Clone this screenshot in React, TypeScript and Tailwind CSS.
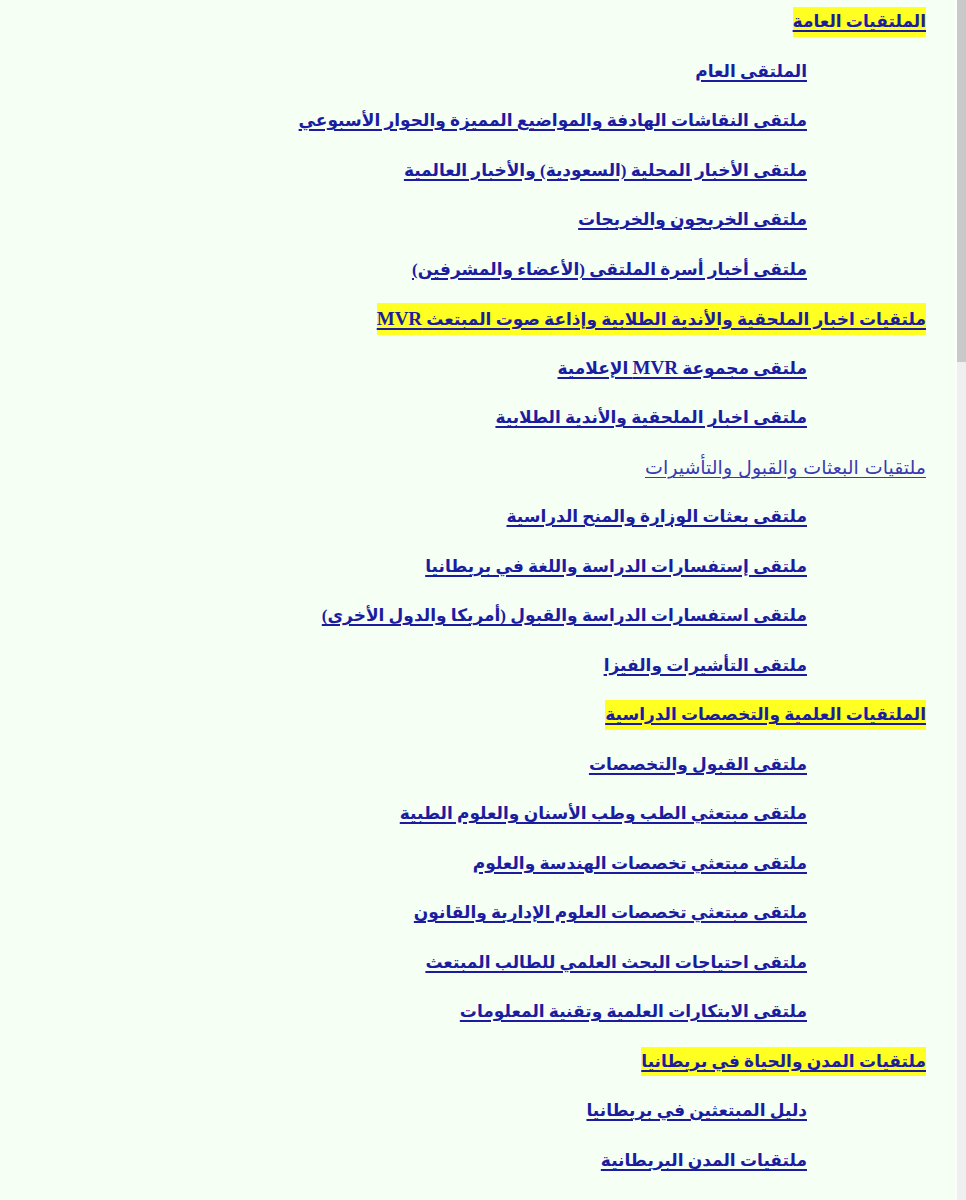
import { Fragment } from "react";

type Item = { text: string; kind: "head" | "plain" | "sub" };

const items: Item[] = [
  { text: "الملتقيات العامة", kind: "head" },
  { text: "الملتقى العام", kind: "sub" },
  { text: "ملتقى النقاشات الهادفة والمواضيع المميزة والحوار الأسبوعي", kind: "sub" },
  { text: "ملتقى الأخبار المحلية (السعودية) والأخبار العالمية", kind: "sub" },
  { text: "ملتقى الخريجون والخريجات", kind: "sub" },
  { text: "ملتقى أخبار أسرة الملتقى (الأعضاء والمشرفين)", kind: "sub" },
  { text: "ملتقيات اخبار الملحقية والأندية الطلابية وإذاعة صوت المبتعث MVR", kind: "head" },
  { text: "ملتقى مجموعة MVR الإعلامية", kind: "sub" },
  { text: "ملتقى اخبار الملحقية والأندية الطلابية", kind: "sub" },
  { text: "ملتقيات البعثات والقبول والتأشيرات", kind: "plain" },
  { text: "ملتقى بعثات الوزارة والمنح الدراسية", kind: "sub" },
  { text: "ملتقى إستفسارات الدراسة واللغة في بريطانيا", kind: "sub" },
  { text: "ملتقى استفسارات الدراسة والقبول (أمريكا والدول الأخرى)", kind: "sub" },
  { text: "ملتقى التأشيرات والفيزا", kind: "sub" },
  { text: "الملتقيات العلمية والتخصصات الدراسية", kind: "head" },
  { text: "ملتقى القبول والتخصصات", kind: "sub" },
  { text: "ملتقى مبتعثي الطب وطب الأسنان والعلوم الطبية", kind: "sub" },
  { text: "ملتقى مبتعثي تخصصات الهندسة والعلوم", kind: "sub" },
  { text: "ملتقى مبتعثي تخصصات العلوم الإدارية والقانون", kind: "sub" },
  { text: "ملتقى احتياجات البحث العلمي للطالب المبتعث", kind: "sub" },
  { text: "ملتقى الابتكارات العلمية وتقنية المعلومات", kind: "sub" },
  { text: "ملتقيات المدن والحياة في بريطانيا", kind: "head" },
  { text: "دليل المبتعثين في بريطانيا", kind: "sub" },
  { text: "ملتقيات المدن البريطانية", kind: "sub" },
];

function Label({ text }: { text: string }) {
  const parts = text.split(/(MVR)/);
  return (
    <>
      {parts.map((p, i) =>
        p === "MVR" ? (
          <span key={i} className="text-[19px]">
            {p}
          </span>
        ) : (
          <Fragment key={i}>{p}</Fragment>
        )
      )}
    </>
  );
}

function ForumLink({ item }: { item: Item }) {
  if (item.kind === "plain") {
    return (
      <a
        href="#"
        className="text-[19px] font-normal text-[#3a3ab0] underline decoration-1 underline-offset-[3px] [font-family:'DejaVu_Sans',sans-serif]"
      >
        {item.text}
      </a>
    );
  }
  return (
    <a
      href="#"
      className={
        item.kind === "head"
          ? "bg-[#ffff22] py-[2px] text-[17px] font-bold text-[#1c1ca0] underline decoration-[1.5px] underline-offset-[3px]"
          : "text-[17px] font-bold text-[#1c1ca0] underline decoration-[1.5px] underline-offset-[3px]"
      }
    >
      <Label text={item.text} />
    </a>
  );
}

export default function App() {
  return (
    <div className="flex h-[1200px] w-[966px] overflow-hidden bg-[#f5fff3] [font-family:'Liberation_Serif','DejaVu_Sans',serif]">
      {/* forum index */}
      <div dir="rtl" className="flex flex-1 flex-col gap-[23.5px] pt-[9px] pr-[29px]">
        {items.map((item, i) => (
          <div
            key={i}
            className={
              item.kind === "sub"
                ? "flex h-[26px] items-center pr-[119px]"
                : "flex h-[26px] items-center"
            }
          >
            <ForumLink item={item} />
          </div>
        ))}
      </div>

      {/* scrollbar */}
      <div className="flex w-[11px] flex-col border-l-[2px] border-[#fbfffb] bg-[#efefef]">
        <div className="h-[362px] bg-[#c9c9c9]" />
      </div>
    </div>
  );
}
